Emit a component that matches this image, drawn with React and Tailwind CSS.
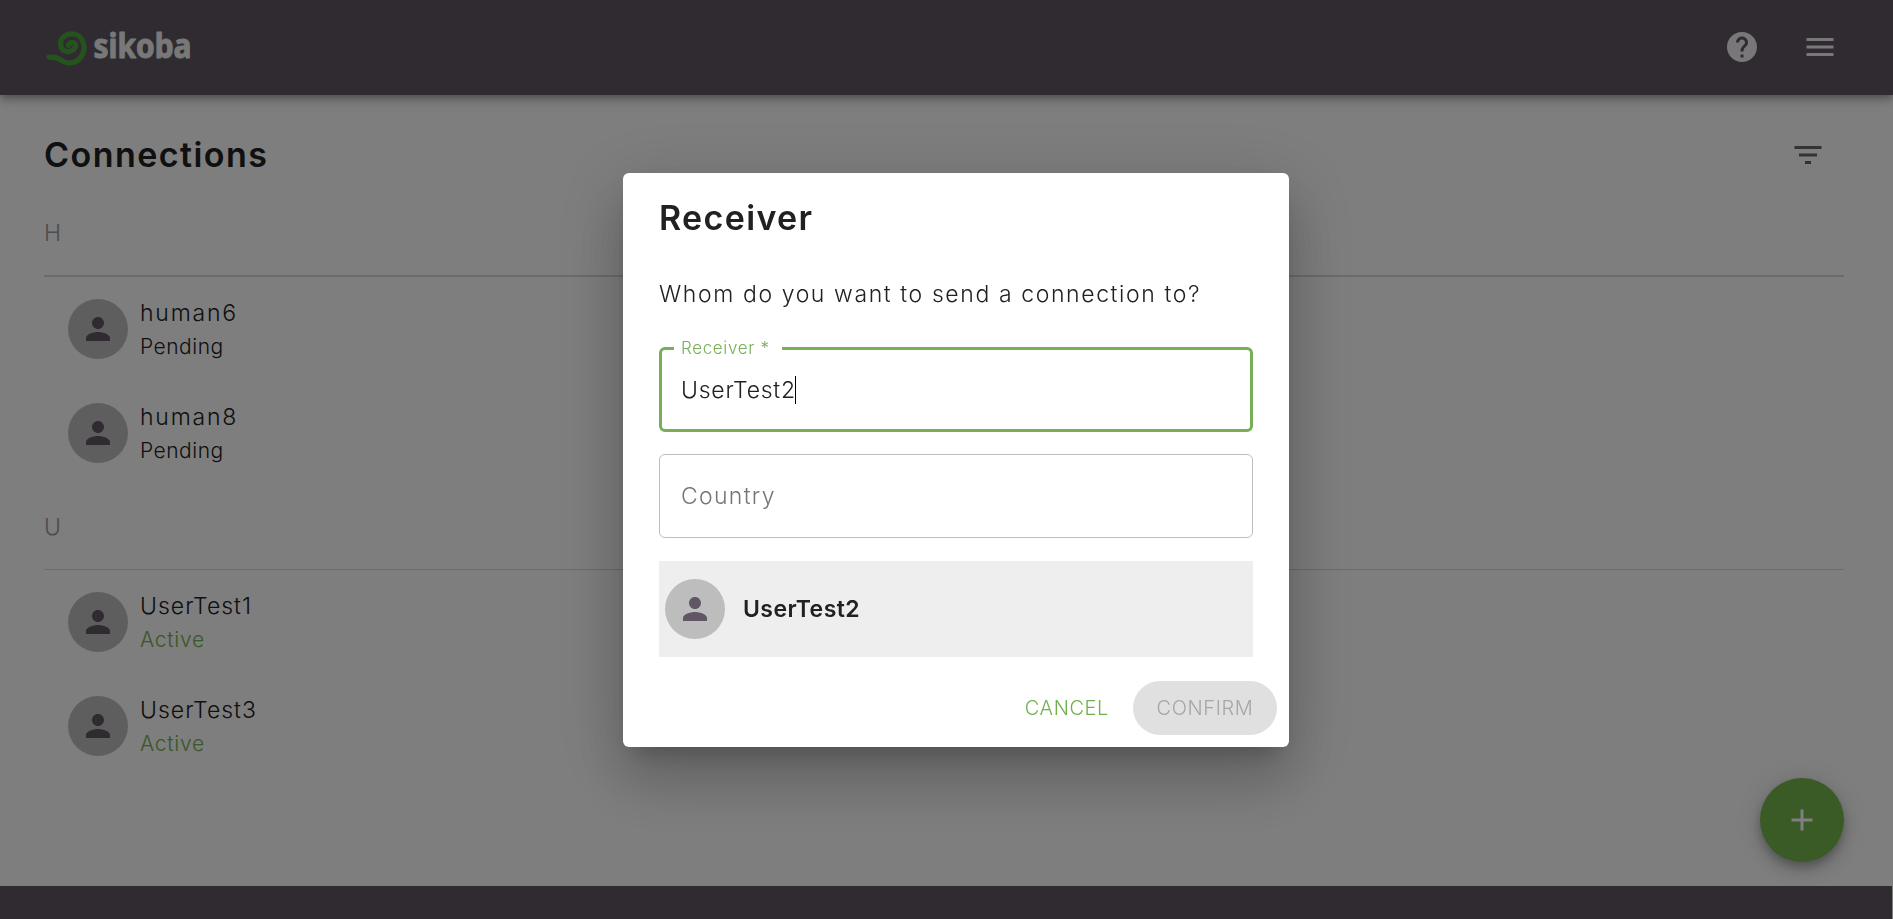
import { MdAdd, MdFilterList, MdHelp, MdMenu, MdPerson } from "react-icons/md";

const groups = [
  {
    letter: "H",
    divider: "h-[2px]",
    nameTracking: "tracking-[1.8px]",
    people: [
      { name: "human6", status: "Pending" },
      { name: "human8", status: "Pending" },
    ],
  },
  {
    letter: "U",
    divider: "h-px",
    nameTracking: "tracking-[1px]",
    people: [
      { name: "UserTest1", status: "Active" },
      { name: "UserTest3", status: "Active" },
    ],
  },
];

function Logo() {
  return (
    <svg width="200" height="95" viewBox="40 0 200 95" className="shrink-0 overflow-visible">
      <path
        d="M49 57.200C53 57 56 56.500 60.500 59.800C65 63.200 72 64.300 77.500 60.500C83 56.500 85.300 49 83.300 43C81.500 36.500 76.500 33.300 71 33.800C64.500 34.300 60.200 38.500 60.500 44C60.800 49.500 65 52.500 69.500 51.500C74 50.500 76.800 46.500 75 43.800C73 41.500 69.500 42.500 68.500 45.200"
        fill="none"
        stroke="#4ba63a"
        strokeWidth="5.200"
        strokeLinecap="round"
        strokeLinejoin="round"
      />
      <text
        x="93.5"
        y="58"
        textLength="98"
        lengthAdjust="spacingAndGlyphs"
        fill="#f0f0f0"
        stroke="#f0f0f0"
        strokeWidth="1"
        strokeLinejoin="round"
        className="font-['Noto_Sans',sans-serif] text-[34px] font-bold"
      >
        sikoba
      </text>
    </svg>
  );
}

function Avatar() {
  return (
    <div className="flex size-[60px] shrink-0 items-center justify-center rounded-full bg-[#bdbdbd] text-[#615663]">
      <MdPerson size={36} />
    </div>
  );
}

function Person({ name, status, nameTracking }) {
  return (
    <li className="flex h-[104px] items-start gap-3 pt-[22px] pl-6">
      <Avatar />
      <div className="flex flex-col">
        <span className={`h-[34px] text-[23px] leading-[28px] ${nameTracking}`}>{name}</span>
        <span
          className={
            status === "Active"
              ? "text-[21px] leading-[28px] tracking-[0.75px] text-[#72b04d]"
              : "text-[21px] leading-[28px] tracking-[0.5px]"
          }
        >
          {status}
        </span>
      </div>
    </li>
  );
}

function Group({ letter, divider, nameTracking, people }) {
  return (
    <section className="mb-[26px]">
      <h2 className="flex h-[58px] items-start text-[23px] leading-[32px] text-[#9a9a9a]">{letter}</h2>
      <div className={`${divider} w-full bg-[#d6d6d6]`} />
      <ul>
        {people.map((p) => (
          <Person key={p.name} nameTracking={nameTracking} {...p} />
        ))}
      </ul>
    </section>
  );
}

function ReceiverDialog() {
  return (
    <div className="fixed inset-0 flex items-start justify-center bg-black/50 pt-[173px] pl-[19px]">
      <div
        role="dialog"
        className="flex h-[574px] w-[666px] flex-col rounded-[6px] bg-white shadow-[0_16px_22px_-10px_rgba(0,0,0,0.2),0_36px_57px_4px_rgba(0,0,0,0.14),0_14px_69px_12px_rgba(0,0,0,0.12)]"
      >
        <div className="flex flex-col px-9">
          <h2 className="mt-6 h-[77px] text-[34px] leading-[42px] font-semibold tracking-[1.35px]">Receiver</h2>
          <p className="h-[58px] text-[23px] leading-[40px] tracking-[1.6px] whitespace-nowrap">
            Whom do you want to send a connection to?
          </p>
          <fieldset className="mt-[2px] h-[98px] rounded-[6px] border-[3px] border-[#76af56] pl-3">
            <legend className="h-[28px] w-[108px] pl-[7px] text-[17px] leading-[28px] tracking-[0.65px] whitespace-nowrap text-[#76af56]">
              Receiver *
            </legend>
            <div className="flex items-center pt-[13px] pl-[7px]">
              <span className="text-[23px] leading-[30px] tracking-[0.75px]">UserTest2</span>
              <span className="-ml-px h-[28px] w-px bg-black" />
            </div>
          </fieldset>
          <div className="mt-[22px] flex h-[84px] items-center rounded-[6px] border border-[#bdbdbd] pl-[21px] text-[23px] tracking-[1.3px] text-[#757575]">
            Country
          </div>
          <div className="mt-[23px] flex h-24 items-center gap-[18px] bg-[#eeeeee] pl-1.5">
            <Avatar />
            <span className="text-[23px] font-semibold tracking-[0.45px]">UserTest2</span>
          </div>
        </div>
        <div className="mt-6 flex items-center justify-end pr-3 text-[20px]">
          <button className="mr-[24px] tracking-[0.6px] text-[#72b04d]">CANCEL</button>
          <button className="h-[54px] w-[144px] rounded-full bg-[#e0e0e0] tracking-[0.6px] text-[#a6a6a6]">
            CONFIRM
          </button>
        </div>
      </div>
    </div>
  );
}

export default function App() {
  return (
    <div className="flex h-[919px] w-full flex-col overflow-hidden bg-[#fcfcfc] font-[Inter,sans-serif] font-light text-[#212121]">
      <header className="z-0 flex h-[95px] shrink-0 items-center justify-between bg-[#615762] pr-[55px] pl-10 text-[#f5eef5] shadow-[0_3px_6px_-1px_rgba(0,0,0,0.2),0_6px_8px_0_rgba(0,0,0,0.14),0_2px_15px_0_rgba(0,0,0,0.12)]">
        <Logo />
        <div className="flex items-center gap-[42px] pb-px">
          <MdHelp size={36} />
          <MdMenu size={36} />
        </div>
      </header>
      <main className="flex h-[791px] shrink-0 flex-col pr-[49px] pl-11">
        <div className="mt-9 flex h-12 items-center justify-between pr-[18px]">
          <h1 className="text-[34px] leading-[48px] font-semibold tracking-[1.45px]">Connections</h1>
          <MdFilterList size={36} className="text-[#666666]" />
        </div>
        <div className="mt-[38px] h-[520px]">
          {groups.map((g) => (
            <Group key={g.letter} {...g} />
          ))}
        </div>
        <button className="mt-[41px] flex size-[84px] shrink-0 items-center justify-center self-end rounded-full bg-[#74b54d] text-white shadow-[0_5px_8px_-1px_rgba(0,0,0,0.2),0_9px_15px_0_rgba(0,0,0,0.14),0_2px_27px_0_rgba(0,0,0,0.12)]">
          <MdAdd size={36} />
        </button>
      </main>
      <footer className="mr-px h-[33px] bg-[#615762]" />
      <ReceiverDialog />
    </div>
  );
}
